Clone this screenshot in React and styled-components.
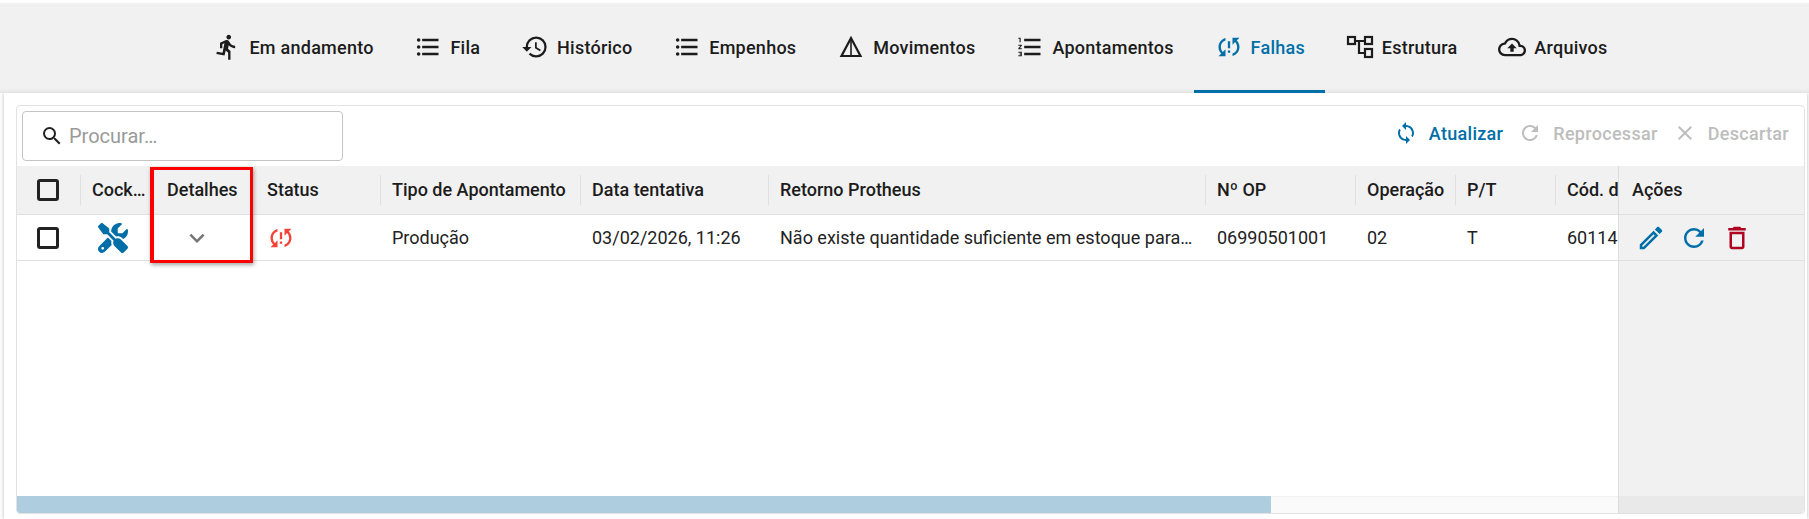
import React from 'react';
import styled, { createGlobalStyle } from 'styled-components';
import {
  MdDirectionsRun, MdFormatListBulleted, MdHistory, MdFormatListNumbered, MdSyncProblem,
  MdOutlineCloudUpload, MdSearch, MdSync, MdRefresh, MdClose,
  MdExpandMore, MdOutlineEdit, MdOutlineDelete,
} from 'react-icons/md';
import { FaScrewdriverWrench } from 'react-icons/fa6';

const PRIMARY = '#006fa8';

const GlobalStyle = createGlobalStyle`
  html, body { margin: 0; padding: 0; background: #fff; }
  body { font-family: Roboto, "Liberation Sans", sans-serif; color: #1c1c1c; overflow: hidden; }
`;

const TriangleIcon = ({ size }) => (
  <svg width={size} height={size} viewBox="0 0 28 28" fill="none" stroke="currentColor" strokeWidth="2.2">
    <path d="M14 5 4.5 23h19L14 5z" />
    <path d="M14 6v17" strokeWidth="1.6" />
  </svg>
);

const TreeIcon = ({ size }) => (
  <svg width={size} height={size} viewBox="0 0 28 28" fill="none" stroke="currentColor" strokeWidth="2.2">
    <rect x="2" y="4" width="7" height="7" />
    <rect x="19" y="4" width="7" height="7" />
    <rect x="19" y="16" width="7" height="8" />
    <path d="M9 8h10M13 8v12h6" />
  </svg>
);

const tabs = [
  { label: 'Em andamento', icon: MdDirectionsRun },
  { label: 'Fila', icon: MdFormatListBulleted },
  { label: 'Histórico', icon: MdHistory },
  { label: 'Empenhos', icon: MdFormatListBulleted },
  { label: 'Movimentos', icon: TriangleIcon },
  { label: 'Apontamentos', icon: MdFormatListNumbered },
  { label: 'Falhas', icon: MdSyncProblem, active: true },
  { label: 'Estrutura', icon: TreeIcon },
  { label: 'Arquivos', icon: MdOutlineCloudUpload },
];

const columns = [
  { title: 'Cock…', width: 75 },
  { title: 'Detalhes', width: 100 },
  { title: 'Status', width: 125 },
  { title: 'Tipo de Apontamento', width: 200 },
  { title: 'Data tentativa', width: 188 },
  { title: 'Retorno Protheus', width: 437 },
  { title: 'Nº OP', width: 150 },
  { title: 'Operação', width: 100 },
  { title: 'P/T', width: 100 },
  { title: 'Cód. do Produto', width: 150 },
];

const Page = styled.div`
  width: 1809px;
  height: 519px;
  padding-top: 3px;
  box-sizing: border-box;
  display: flex;
  flex-direction: column;
`;

const TabBar = styled.nav`
  height: 90px;
  flex: none;
  background: #f1f1f1;
  display: flex;
  justify-content: center;
  padding-left: 12px;
  box-shadow: inset 0 -5px 4px -4px #dcdcdc;
  position: relative;
`;

const Tab = styled.div`
  display: flex;
  align-items: center;
  gap: 8px;
  padding: 1px 20.4px 0;
  font-size: 18px;
  font-weight: 500;
  letter-spacing: 0.25px;
  color: ${p => (p.$active ? PRIMARY : '#1c1c1c')};
  border-bottom: 3px solid ${p => (p.$active ? PRIMARY : 'transparent')};
  box-sizing: border-box;
`;

const Panel = styled.main`
  flex: 1;
  min-height: 0;
  margin: 0 2px 0 4px;
  padding: 12px 2px 5px 12px;
  background: #fff;
  box-shadow: 0 0 4px rgba(0, 0, 0, 0.28);
`;

const Card = styled.section`
  border: 1px solid #e2e2e2;
  border-radius: 4px;
  height: 409px;
  box-sizing: border-box;
  display: flex;
  flex-direction: column;
  overflow: hidden;
`;

const Toolbar = styled.div`
  height: 60px;
  flex: none;
  box-sizing: border-box;
  display: flex;
  align-items: flex-start;
  justify-content: space-between;
  padding: 5px 15px 0 5px;
`;

const SearchBox = styled.div`
  width: 321px;
  height: 50px;
  box-sizing: border-box;
  border: 1px solid #c4c4c4;
  border-radius: 4px;
  display: flex;
  align-items: center;
  gap: 5px;
  padding-left: 17px;
  font-size: 20px;
  color: #9a9a9a;
`;

const Actions = styled.div`
  display: flex;
  align-items: center;
  gap: 15px;
  height: 44px;
`;

const ActionButton = styled.div`
  display: flex;
  align-items: center;
  gap: 11px;
  font-size: 18px;
  font-weight: 500;
  letter-spacing: 0.3px;
  color: ${p => (p.$disabled ? '#bdbdbd' : PRIMARY)};
`;

const TableArea = styled.div`
  flex: 1;
  min-height: 0;
  display: flex;
  position: relative;
`;

const ScrollPane = styled.div`
  flex: 1;
  min-width: 0;
  overflow: hidden;
  display: flex;
  flex-direction: column;
`;

const Row = styled.div`
  display: flex;
  width: max-content;
  height: ${p => (p.$head ? '49px' : '46px')};
  box-sizing: border-box;
  border-bottom: 1px solid #e0e0e0;
  background: ${p => (p.$head ? '#f1f1f1' : '#fff')};
`;

const SelectCell = styled.div`
  width: 63px;
  flex: none;
  display: flex;
  align-items: center;
  justify-content: center;
  box-sizing: border-box;
  padding-right: 1px;
`;

const Cell = styled.div`
  width: ${p => p.$width}px;
  flex: none;
  box-sizing: border-box;
  padding: 0 0 0 ${p => p.$inset || 12}px;
  display: flex;
  align-items: center;
  font-size: 18px;
  white-space: nowrap;
  overflow: hidden;
  color: #222;
`;

const HeadCell = styled(Cell)`
  font-weight: 500;
  color: #1c1c1c;
  position: relative;
  padding-bottom: 2px;
  &::before {
    content: '';
    display: ${p => (p.$noDivider ? 'none' : 'block')};
    position: absolute;
    left: 0;
    top: 9px;
    bottom: 9px;
    width: 1px;
    background: #e0e0e0;
  }
`;

const Checkbox = styled.span`
  width: 22px;
  height: 22px;
  box-sizing: border-box;
  border: 3px solid #222;
  border-radius: 3px;
  display: block;
`;

const Spacer = styled.div`
  flex: 1;
`;

const Track = styled.div`
  height: 17px;
  flex: none;
  background: #fafafa;
  box-shadow: inset 0 1px 1px #f0f0f0;
  width: 100%;
`;

const Thumb = styled.div`
  height: 100%;
  width: 1254px;
  background: #aecee0;
`;

const ActionsColumn = styled.div`
  width: 186px;
  flex: none;
  box-sizing: border-box;
  background: #f1f1f1;
  border-left: 1px solid #dcdcdc;
  display: flex;
  flex-direction: column;
`;

const ActionsHead = styled.div`
  height: 49px;
  box-sizing: border-box;
  border-bottom: 1px solid #e0e0e0;
  padding: 0 0 2px 13px;
  display: flex;
  align-items: center;
  font-size: 18px;
  font-weight: 500;
`;

const ActionsRow = styled.div`
  height: 46px;
  box-sizing: border-box;
  border-bottom: 1px solid #e0e0e0;
  padding-left: 17px;
  display: flex;
  align-items: center;
  gap: 13px;
  color: ${PRIMARY};
`;

const ActionsTrack = styled.div`
  height: 17px;
  background: #e9e9e9;
`;

const Highlight = styled.div`
  position: absolute;
  left: 133px;
  top: 1px;
  width: 103px;
  height: 96px;
  box-sizing: border-box;
  border: 3px solid #f00;
  border-left-width: 4px;
  box-shadow: 1px 2px 4px rgba(0, 0, 0, 0.35);
  pointer-events: none;
`;

const cells = [
  'Produção', '03/02/2026, 11:26', 'Não existe quantidade suficiente em estoque para…',
  '06990501001', '02', 'T', '60114',
];

export default function App() {
  return (
    <Page>
      <GlobalStyle />
      <TabBar>
        {tabs.map(({ label, icon: Icon, active }) => (
          <Tab key={label} $active={active}>
            <Icon size={28} />
            {label}
          </Tab>
        ))}
      </TabBar>
      <Panel>
        <Card>
          <Toolbar>
            <SearchBox>
              <MdSearch size={24} color="#222" />
              Procurar…
            </SearchBox>
            <Actions>
              <ActionButton><MdSync size={24} />Atualizar</ActionButton>
              <ActionButton $disabled><MdRefresh size={24} />Reprocessar</ActionButton>
              <ActionButton $disabled><MdClose size={24} />Descartar</ActionButton>
            </Actions>
          </Toolbar>
          <TableArea>
            <ScrollPane>
              <Row $head>
                <SelectCell><Checkbox /></SelectCell>
                {columns.map(c => (
                  <HeadCell key={c.title} $width={c.width} $noDivider={c.title === 'Detalhes' || c.title === 'Status'}>
                    {c.title}
                  </HeadCell>
                ))}
              </Row>
              <Row>
                <SelectCell><Checkbox /></SelectCell>
                <Cell $width={columns[0].width} $inset={18}><FaScrewdriverWrench size={30} color={PRIMARY} /></Cell>
                <Cell $width={columns[1].width} $inset={27}><MdExpandMore size={30} color="#757575" /></Cell>
                <Cell $width={columns[2].width}><MdSyncProblem size={28} color="#f44336" /></Cell>
                {cells.map((text, i) => (
                  <Cell key={i} $width={columns[i + 3].width}>{text}</Cell>
                ))}
              </Row>
              <Spacer />
              <Track><Thumb /></Track>
            </ScrollPane>
            <ActionsColumn>
              <ActionsHead>Ações</ActionsHead>
              <ActionsRow>
                <MdOutlineEdit size={30} />
                <MdRefresh size={30} />
                <MdOutlineDelete size={30} color="#b00020" />
              </ActionsRow>
              <Spacer />
              <ActionsTrack />
            </ActionsColumn>
            <Highlight />
          </TableArea>
        </Card>
      </Panel>
    </Page>
  );
}
